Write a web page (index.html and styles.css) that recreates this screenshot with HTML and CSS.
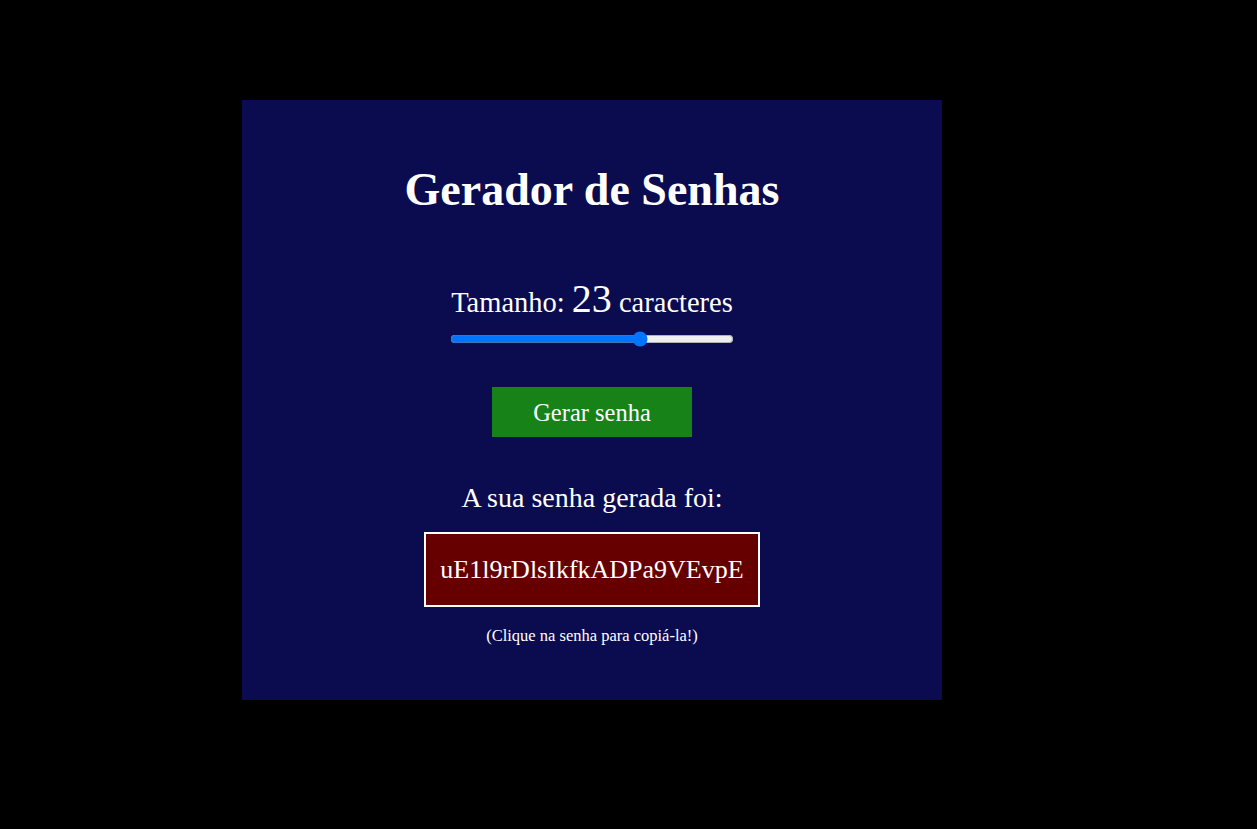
FILE: index.html
```html
<!DOCTYPE html>
<html lang="pt-BR">
<head>
<meta charset="utf-8">
<title>Gerador de Senhas</title>
<link rel="stylesheet" href="styles.css">
</head>
<body>
<main class="stage">
  <section class="card">
    <h1 class="title">Gerador de Senhas</h1>
    <div class="size">
      <p class="size-label">Tamanho: <span class="size-num">23</span> caracteres</p>
      <input class="slider" type="range" min="4" max="32" value="23">
    </div>
    <button class="btn" type="button">Gerar senha</button>
    <p class="result-label">A sua senha gerada foi:</p>
    <div class="password">uE1l9rDlsIkfkADPa9VEvpE</div>
    <p class="hint">(Clique na senha para copiá-la!)</p>
  </section>
</main>
</body>
</html>
```

FILE: styles.css
```css
html, body {
  margin: 0;
  padding: 0;
  background: #000;
  height: 100%;
}
body {
  font-family: "Liberation Serif", "DejaVu Serif", serif;
  color: #fff;
}
.stage {
  display: flex;
  justify-content: flex-start;
  padding: 100px 0 0 242px;
}
.card {
  width: 700px;
  height: 600px;
  box-sizing: border-box;
  background: #0b0b4f;
  display: flex;
  flex-direction: column;
  align-items: center;
  padding-top: 60px;
}
.title {
  margin: 0;
  font-size: 46px;
  font-weight: bold;
  line-height: 60px;
}
.size {
  margin-top: 59px;
  display: flex;
  flex-direction: column;
  align-items: center;
}
.size-label {
  margin: 0;
  font-size: 28.5px;
  line-height: 40px;
}
.size-num {
  font-size: 40px;
}
.slider {
  margin: 8px 0 0;
  width: 284px;
  accent-color: #0075ff;
}
.btn {
  margin-top: 40px;
  width: 200px;
  height: 50px;
  border: none;
  background: #168218;
  color: #fff;
  font-family: inherit;
  font-size: 24.5px;
  padding: 2px 0 0;
  cursor: pointer;
}
.result-label {
  margin: 45px 0 0;
  font-size: 28px;
  line-height: 32px;
}
.password {
  margin-top: 18px;
  width: 336px;
  height: 75px;
  box-sizing: border-box;
  border: 2px solid #fff;
  background: #660000;
  display: flex;
  align-items: center;
  justify-content: center;
  font-size: 26px;
  cursor: pointer;
}
.hint {
  margin: 19px 0 0;
  font-size: 16.5px;
  line-height: 20px;
}
```
